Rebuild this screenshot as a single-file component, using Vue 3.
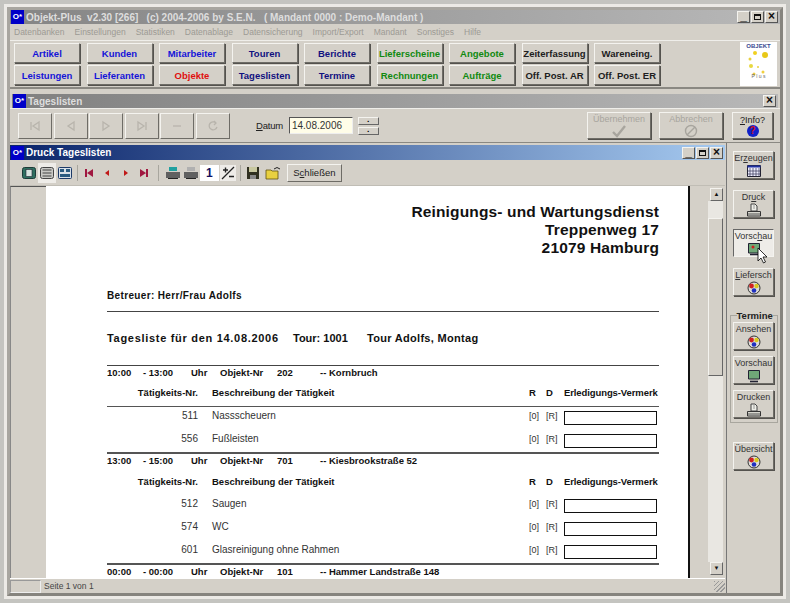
<template>
  <div class="screen">
    <svg class="defs" width="0" height="0">
      <symbol id="ico-print" viewBox="0 0 16 14">
        <path d="M5 1 H9 L11 3 V8 H5 Z" fill="#eeeee8" stroke="#444" />
        <path d="M7 3 H9 M7 5 H9" stroke="#777" stroke-width="0.7" />
        <path d="M1.5 8.5 H14.5 V13 H1.5 Z" fill="#d8d8d0" stroke="#333" />
        <path d="M2 11 H14" stroke="#333" stroke-width="0.8" />
      </symbol>
      <symbol id="ico-colors" viewBox="0 0 16 14">
        <circle cx="8" cy="7" r="6" fill="#dcdcd8" stroke="#333" />
        <circle cx="5.5" cy="5" r="2.4" fill="#d02020" />
        <circle cx="10.5" cy="5" r="2.2" fill="#d8c820" />
        <circle cx="8" cy="9.5" r="2.3" fill="#2030c0" />
      </symbol>
      <symbol id="ico-screen" viewBox="0 0 16 14">
        <path d="M2.5 1.5 H13.5 V10 H2.5 Z" fill="#70a878" stroke="#223" />
        <path d="M4 12.5 H12" stroke="#223" stroke-width="1.6" />
      </symbol>
    </svg>
    <div class="outer">
      <div class="frame">
        <div class="title main-title">
          <span class="app-ico">O*</span>
          <span class="title-text">Objekt-Plus&nbsp; v2.30 [266] &nbsp;&nbsp;(c) 2004-2006 by S.E.N. &nbsp;&nbsp;( Mandant 0000 : Demo-Mandant )</span>
          <div class="win-btns">
            <span class="wb">_</span><span class="wb box-glyph"><i></i></span><span class="wb">×</span>
          </div>
        </div>
        <div class="menu">
          <span v-for="m in menu" :key="m">{{ m }}</span>
        </div>
        <div class="nav">
          <div class="nav-grid">
            <button v-for="b in navButtons" :key="b.t" class="nav-btn" :class="b.c">{{ b.t }}</button>
          </div>
          <div class="logo">
            <div class="logo-top">OBJEKT</div>
            <svg viewBox="0 0 36 26" width="36" height="26">
              <circle cx="14" cy="3" r="2" fill="#f0d020" />
              <circle cx="24" cy="5" r="3" fill="#e8c818" />
              <circle cx="9" cy="9" r="1.5" fill="#e8d040" />
              <circle cx="10" cy="16" r="2" fill="#e8d840" />
              <circle cx="17" cy="17" r="1" fill="#e8d040" />
              <circle cx="22" cy="22" r="1.5" fill="#f0d040" />
              <circle cx="13" cy="24" r="1.5" fill="#f0c840" />
            </svg>
            <div class="logo-bot">P l u s</div>
          </div>
        </div>

        <div class="title sub-title">
          <span class="app-ico">O*</span>
          <span class="title-text">Tageslisten</span>
          <div class="win-btns"><span class="wb">×</span></div>
        </div>
        <div class="tools">
          <div class="nav-icons">
            <button v-for="(d, i) in toolPaths" :key="i" class="tool-btn">
              <svg viewBox="0 0 14 14" width="14" height="14"><path :d="d" fill="none" stroke="#b8b4ac" stroke-width="1.3" /></svg>
            </button>
          </div>
          <label class="datum"><u>D</u>atum</label>
          <div class="date-input">14.08.2006</div>
          <div class="spin"><span>▪</span><span>▪</span></div>
          <div class="spacer"></div>
          <button class="big-btn disabled">
            <span>Übernehmen</span>
            <svg viewBox="0 0 16 14" width="16" height="14"><path d="M2 8 L6 12 L14 2" fill="none" stroke="#a8a59e" stroke-width="2.4" /></svg>
          </button>
          <button class="big-btn disabled">
            <span>Abbrechen</span>
            <svg viewBox="0 0 14 14" width="14" height="14"><circle cx="7" cy="7" r="5.5" fill="none" stroke="#a8a59e" stroke-width="1.4" /><path d="M3 11 L11 3" stroke="#a8a59e" stroke-width="1.4" /></svg>
          </button>
          <button class="big-btn info">
            <span><u>?</u>Info?</span>
            <span class="info-dot">?</span>
          </button>
        </div>

        <div class="body">
          <div class="print-win">
            <div class="title print-title">
              <span class="app-ico">O*</span>
              <span class="title-text">Druck Tageslisten</span>
              <div class="win-btns"><span class="wb">_</span><span class="wb box-glyph"><i></i></span><span class="wb">×</span></div>
            </div>
            <div class="print-tools">
              <svg class="t1" viewBox="0 0 14 12" width="14" height="12"><rect x="0.5" y="0.5" width="13" height="11" rx="2" fill="#2f6f60" stroke="#1c3a38" /><rect x="4" y="2.5" width="6" height="7" fill="#d8e4e0" stroke="#223" stroke-width="0.6" /></svg>
              <span class="t2">
                <svg viewBox="0 0 14 12" width="14" height="12"><rect x="0.5" y="0.5" width="13" height="11" rx="2" fill="#c8c8c4" stroke="#444" /><path d="M2.5 3 H11.5 M2.5 6 H11.5 M2.5 9 H11.5" stroke="#444" /></svg>
              </span>
              <svg class="t3" viewBox="0 0 14 12" width="14" height="12"><rect x="0.5" y="0.5" width="13" height="11" rx="1" fill="#d8e0e8" stroke="#1c3a68" /><rect x="2" y="2" width="4" height="3" fill="#2a5a80" /><rect x="8" y="2" width="4" height="3" fill="#2a5a80" /><rect x="2" y="7" width="10" height="3" fill="#2a5a80" /></svg>
              <span class="sep s1"></span>
              <span class="nav-arrows">
                <svg v-for="(a, i) in arrowPaths" :key="i" viewBox="0 0 10 10" width="10" height="10"><path :d="a.d" :fill="a.c" /></svg>
              </span>
              <span class="sep s2"></span>
              <svg class="pr1" viewBox="0 0 16 14" width="16" height="14"><path d="M4 1 H12 V5 H4 Z" fill="#20a0a0" /><path d="M1 6 H15 V12 H1 Z" fill="#606060" /><path d="M3 12 H13 V13 H3 Z" fill="#222" /></svg>
              <svg class="pr2" viewBox="0 0 16 14" width="16" height="14"><path d="M4 1 H12 V5 H4 Z" fill="#b0b0b0" /><path d="M1 6 H15 V12 H1 Z" fill="#606060" /><path d="M3 12 H13 V13 H3 Z" fill="#222" /></svg>
              <span class="page-one">1</span>
              <span class="page-more">
                <svg viewBox="0 0 14 14" width="14" height="14"><path d="M1 13 L13 1" stroke="#222" stroke-width="1.2" /><path d="M2 4 H7 M4.5 1.5 V6.5 M8 10.5 H13" stroke="#222" stroke-width="1.4" /></svg>
              </span>
              <span class="sep s3"></span>
              <svg class="save" viewBox="0 0 14 14" width="14" height="14"><path d="M1 1 H13 V13 H1 Z" fill="#303020" /><path d="M3 1 H11 V6 H3 Z" fill="#c8c8a0" /><path d="M4 9 H10 V13 H4 Z" fill="#888" /></svg>
              <svg class="open" viewBox="0 0 16 14" width="16" height="14"><path d="M1 4 H6 L7 5 H13 V13 H1 Z" fill="#e8d040" stroke="#605010" stroke-width="0.8" /><path d="M9 3 Q12 0 15 3" fill="none" stroke="#222" stroke-width="1" /></svg>
              <button class="close-btn">S<u>c</u>hließen</button>
            </div>
            <div class="preview">
              <div class="gutter"></div>
              <div class="paper">
                <div class="company">
                  <div>Reinigungs- und Wartungsdienst</div>
                  <div>Treppenweg 17</div>
                  <div>21079 Hamburg</div>
                </div>
                <div class="betreuer">Betreuer: Herr/Frau Adolfs</div>
                <div class="summary">
                  <span class="sum-date">Tagesliste für den 14.08.2006</span>
                  <span class="sum-tour">Tour: 1001</span>
                  <span class="sum-name">Tour Adolfs, Montag</span>
                </div>
                <div v-for="(g, gi) in groups" :key="g.obj" class="group">
                  <div class="g-head">
                    <span class="g-time">{{ g.from }}</span>
                    <span class="g-to">- {{ g.to }}</span>
                    <span class="g-uhr">Uhr</span>
                    <span class="g-label">Objekt-Nr</span>
                    <span class="g-nr">{{ g.obj }}</span>
                    <span class="g-name">-- {{ g.name }}</span>
                  </div>
                  <template v-if="g.rows.length">
                    <div class="col-head" :class="{ lined: gi === 0 }">
                      <span class="c-nr">Tätigkeits-Nr.</span>
                      <span class="c-desc">Beschreibung der Tätigkeit</span>
                      <span class="c-r">R</span>
                      <span class="c-d">D</span>
                      <span class="c-v">Erledigungs-Vermerk</span>
                    </div>
                    <div v-for="r in g.rows" :key="r.nr" class="row">
                      <span class="c-nr">{{ r.nr }}</span>
                      <span class="c-desc">{{ r.text }}</span>
                      <span class="c-r flag">[0]</span>
                      <span class="c-d flag">[R]</span>
                      <span class="c-v"><i class="box"></i></span>
                    </div>
                  </template>
                </div>
              </div>
              <div class="after-paper"></div>
              <div class="scroll">
                <span class="arrow">▲</span>
                <span class="track-top"></span>
                <span class="thumb"></span>
                <span class="track"></span>
                <span class="arrow">▼</span>
              </div>
            </div>
            <div class="status">
              <span class="st-a"></span>
              <span class="st-b">Seite 1 von 1</span>
              <span class="grip"></span>
            </div>
          </div>
          <div class="side">
            <button class="side-btn">
              <span>Er<u>z</u>eugen</span>
              <svg viewBox="0 0 16 14" width="16" height="14"><path d="M1.5 1.5 H14.5 V12.5 H1.5 Z" fill="#eef" stroke="#223" /><path d="M1.5 2.5 H14.5" stroke="#2030a0" stroke-width="2" /><path d="M4 4 V12 M7 4 V12 M10 4 V12 M13 4 V12 M2 7 H14 M2 10 H14" stroke="#335" stroke-width="0.7" /></svg>
            </button>
            <button class="side-btn">
              <span>Dr<u>u</u>ck</span>
              <svg width="16" height="14"><use href="#ico-print" /></svg>
            </button>
            <button class="side-btn pressed">
              <span>Vorsc<u>h</u>au</span>
              <svg viewBox="0 0 16 14" width="16" height="14"><path d="M2.5 1.5 H13.5 V11 H2.5 Z" fill="#70a878" stroke="#223" /><circle cx="7" cy="5" r="1.5" fill="#d02020" /><path d="M4 12.5 H12" stroke="#223" stroke-width="1.5" /></svg>
              <svg class="cursor" viewBox="0 0 12 18" width="12" height="18"><path d="M1 1 V14 L4 11 L6.5 16 L8.5 15 L6 10 H10 Z" fill="#fff" stroke="#000" stroke-width="0.8" /></svg>
            </button>
            <button class="side-btn">
              <span><u>L</u>iefersch</span>
              <svg width="16" height="14"><use href="#ico-colors" /></svg>
            </button>
            <fieldset class="termine">
              <legend>Termine</legend>
              <button class="side-btn">
                <span>Ansehen</span>
                <svg width="16" height="14"><use href="#ico-colors" /></svg>
              </button>
              <button class="side-btn">
                <span>Vorschau</span>
                <svg width="16" height="14"><use href="#ico-screen" /></svg>
              </button>
              <button class="side-btn">
                <span>Drucken</span>
                <svg width="16" height="14"><use href="#ico-print" /></svg>
              </button>
            </fieldset>
            <button class="side-btn last">
              <span>Übersicht</span>
              <svg width="16" height="14"><use href="#ico-colors" /></svg>
            </button>
          </div>
        </div>
      </div>
    </div>
  </div>
</template>

<script setup>
const menu = ['Datenbanken', 'Einstellungen', 'Statistiken', 'Datenablage', 'Datensicherung', 'Import/Export', 'Mandant', 'Sonstiges', 'Hilfe'];

const navButtons = [
  { t: 'Artikel', c: 'blue' },
  { t: 'Kunden', c: 'blue' },
  { t: 'Mitarbeiter', c: 'blue' },
  { t: 'Touren', c: 'navy' },
  { t: 'Berichte', c: 'navy' },
  { t: 'Lieferscheine', c: 'green' },
  { t: 'Angebote', c: 'green' },
  { t: 'Zeiterfassung', c: 'black' },
  { t: 'Wareneing.', c: 'black' },
  { t: 'Leistungen', c: 'blue' },
  { t: 'Lieferanten', c: 'blue' },
  { t: 'Objekte', c: 'red' },
  { t: 'Tageslisten', c: 'navy' },
  { t: 'Termine', c: 'navy' },
  { t: 'Rechnungen', c: 'green' },
  { t: 'Aufträge', c: 'green' },
  { t: 'Off. Post. AR', c: 'black' },
  { t: 'Off. Post. ER', c: 'black' },
];

const toolPaths = [
  'M3 3 V11 M11 3 L5 7 L11 11 Z',
  'M10 3 L4 7 L10 11 Z',
  'M4 3 L10 7 L4 11 Z',
  'M3 3 L9 7 L3 11 Z M11 3 V11',
  'M3 7 H11',
  'M10 4 A4 4 0 1 0 11 8 M8 2 L10 4 L8 6',
];

const arrowPaths = [
  { d: 'M1 1 H3 V9 H1 Z M9 1 V9 L3 5 Z', c: '#a01840' },
  { d: 'M7 2 V8 L3 5 Z', c: '#c01818' },
  { d: 'M3 2 V8 L7 5 Z', c: '#c01818' },
  { d: 'M1 1 V9 L7 5 Z M7 1 H9 V9 H7 Z', c: '#a01840' },
];

const groups = [
  {
    from: '10:00', to: '13:00', obj: '202', name: 'Kornbruch',
    rows: [
      { nr: '511', text: 'Nassscheuern' },
      { nr: '556', text: 'Fußleisten' },
    ],
  },
  {
    from: '13:00', to: '15:00', obj: '701', name: 'Kiesbrookstraße 52',
    rows: [
      { nr: '512', text: 'Saugen' },
      { nr: '574', text: 'WC' },
      { nr: '601', text: 'Glasreinigung ohne Rahmen' },
    ],
  },
  { from: '00:00', to: '00:00', obj: '101', name: 'Hammer Landstraße 148', rows: [] },
];
</script>

<style>
html, body { margin: 0; background: #d4d0c8; }
</style>

<style scoped>
.screen {
  width: 790px;
  height: 603px;
  box-sizing: border-box;
  padding: 4px;
  background: #c4c4c0;
  font-family: "Liberation Sans", Arial, sans-serif;
  font-size: 10px;
  overflow: hidden;
}
.defs { position: absolute; }
.outer {
  height: 595px;
  box-sizing: border-box;
  border: 3px solid #eceae6;
}
.frame {
  height: 589px;
  box-sizing: border-box;
  border: 3px solid;
  border-color: #a8a6a0 #86847e #86847e #a8a6a0;
  background: #d4d0c8;
  display: flex;
  flex-direction: column;
}
button {
  font-family: inherit;
  padding: 0;
  background: #d4d0c8;
  border: 1px solid;
  border-color: #f4f3ef #6e6c66 #6e6c66 #f4f3ef;
  box-shadow: 1px 1px 0 #54524e;
  color: #222;
}
.title {
  display: flex;
  align-items: center;
  color: #dedede;
  font-weight: bold;
  flex: none;
}
.main-title {
  height: 14px;
  background: linear-gradient(90deg, #858585, #b8b8b8);
}
.sub-title {
  height: 14px;
  margin: 5px 2px 0;
  background: linear-gradient(90deg, #808080, #b8b8b8);
}
.print-title {
  height: 15px;
  background: linear-gradient(90deg, #0a246a, #a6caf0);
  color: #fff;
}
.app-ico {
  width: 13px;
  height: 14px;
  margin: 0 2px 0 1px;
  background: #0000c8;
  color: #fff;
  font-size: 8px;
  line-height: 14px;
  text-align: center;
  flex: none;
}
.title-text { flex: 1; white-space: nowrap; }
.win-btns { display: flex; gap: 1px; margin-right: 2px; }
.wb {
  width: 13px;
  height: 12px;
  box-sizing: border-box;
  background: #d4d0c8;
  border: 1px solid;
  border-color: #f4f3ef #555 #555 #f4f3ef;
  color: #111;
  font-size: 12px;
  line-height: 9px;
  text-align: center;
}
.box-glyph { display: flex; align-items: center; justify-content: center; }
.box-glyph i {
  width: 7px;
  height: 6px;
  box-sizing: border-box;
  border: 1px solid #111;
  border-top-width: 2px;
}
.menu {
  display: flex;
  gap: 10px;
  height: 16px;
  align-items: center;
  padding-left: 4px;
  color: #9c9a94;
  font-size: 8.5px;
  flex: none;
}
.nav {
  height: 46px;
  display: flex;
  align-items: center;
  justify-content: space-between;
  border-top: 1px solid #efeeea;
  border-bottom: 2px solid #8a8882;
  flex: none;
}
.nav-grid {
  display: grid;
  grid-template-columns: repeat(9, 66px);
  grid-auto-rows: 20px;
  column-gap: 6.5px;
  row-gap: 2px;
  padding-left: 4px;
}
.nav-btn {
  font-size: 9.5px;
  font-weight: bold;
  white-space: nowrap;
}
.blue { color: #1414d8; }
.navy { color: #101080; }
.green { color: #108a10; }
.black { color: #202020; }
.red { color: #e01010; }
.logo {
  width: 37px;
  height: 44px;
  margin-right: 3px;
  background: #fff;
  text-align: center;
  overflow: hidden;
}
.logo svg { display: block; margin: -1px auto -4px; }
.logo-top { font-size: 6px; font-weight: bold; color: #3a4a90; line-height: 9px; }
.logo-bot { font-size: 5px; color: #666; line-height: 8px; }
.tools {
  height: 33px;
  display: flex;
  align-items: center;
  padding: 0 7px 0 8px;
  border-top: 1px solid #efeeea;
  flex: none;
}
.nav-icons { display: flex; gap: 1.6px; }
.tool-btn {
  width: 34px;
  height: 26px;
  box-shadow: none;
  display: flex;
  align-items: center;
  justify-content: center;
}
.datum { margin-left: 26px; font-size: 9.5px; color: #222; letter-spacing: -0.2px; }
.date-input {
  margin-left: 6px;
  width: 64px;
  height: 17px;
  box-sizing: border-box;
  padding-left: 2px;
  background: #fffde8;
  border: 1px solid;
  border-color: #555 #eee #eee #555;
  font-size: 10px;
  line-height: 15px;
  color: #333;
}
.spin { display: flex; flex-direction: column; gap: 2px; margin-left: 5px; }
.spin span {
  width: 21px;
  height: 8px;
  box-sizing: border-box;
  border: 1px solid;
  border-color: #f4f3ef #666 #666 #f4f3ef;
  font-size: 5px;
  line-height: 6px;
  text-align: center;
}
.spacer { flex: 1; }
.big-btn {
  width: 64px;
  height: 27px;
  margin-left: 8px;
  font-size: 9px;
  display: flex;
  flex-direction: column;
  align-items: center;
  justify-content: center;
}
.disabled { color: #a8a59e; }
.info { width: 41px; margin-left: 9px; color: #222; }
.info-dot {
  width: 12px;
  height: 12px;
  border-radius: 50%;
  background: #1020c8;
  color: #d01020;
  font-weight: bold;
  font-size: 10px;
  line-height: 12px;
}
.body {
  flex: 1;
  display: flex;
  min-height: 0;
  border-top: 1px solid #8a8882;
}
.print-win {
  flex: 1;
  min-width: 0;
  display: flex;
  flex-direction: column;
  padding-top: 2px;
}
.print-tools {
  height: 25px;
  display: flex;
  align-items: center;
  padding-left: 12px;
  border-bottom: 1px solid #c0bdb5;
  flex: none;
}
.t2 {
  width: 18px;
  height: 20px;
  margin: 0 2px;
  background: #eeece8;
  display: flex;
  align-items: center;
  justify-content: center;
}
.sep { width: 1px; height: 16px; background: #a8a69e; }
.s1 { margin-left: 5px; }
.s2 { margin-left: 9px; }
.s3 { margin-left: 4px; }
.nav-arrows { display: flex; gap: 8.3px; margin-left: 6px; }
.pr1 { margin-left: 6px; }
.pr2 { margin-left: 2px; }
.page-one {
  width: 19px;
  height: 16px;
  margin-left: 1px;
  background: #fff;
  color: #101060;
  font-size: 12px;
  font-weight: bold;
  line-height: 16px;
  text-align: center;
}
.page-more {
  width: 16px;
  height: 16px;
  margin-left: 1px;
  background: #eeece8;
  display: flex;
  align-items: center;
  justify-content: center;
}
.save { margin-left: 5px; }
.open { margin-left: 5px; }
.close-btn {
  width: 55px;
  height: 18px;
  margin-left: 6px;
  font-size: 9.5px;
  box-shadow: none;
}
.preview {
  flex: 1;
  min-height: 0;
  display: flex;
  overflow: hidden;
}
.gutter {
  width: 36px;
  box-sizing: border-box;
  background: #d4d0c8;
  border-top: 1px solid #555;
  border-left: 1px solid #888;
  flex: none;
}
.paper {
  width: 644px;
  flex: none;
  box-sizing: border-box;
  padding: 17px 29px 0 61px;
  background: #fff;
  border-right: 2px solid #111;
  overflow: hidden;
  color: #111;
}
.company {
  font-size: 15.5px;
  font-weight: bold;
  letter-spacing: 0.15px;
  text-align: right;
  line-height: 18px;
}
.betreuer {
  margin-top: 32px;
  padding-bottom: 8px;
  border-bottom: 1px solid #444;
  font-size: 10px;
  font-weight: bold;
  letter-spacing: 0.35px;
  line-height: 14px;
}
.summary {
  display: flex;
  margin-top: 19px;
  padding-bottom: 20px;
  border-bottom: 1px solid #444;
  font-size: 11px;
  font-weight: bold;
  line-height: 14px;
}
.sum-date { width: 186px; letter-spacing: 0.7px; }
.sum-tour { width: 74px; }
.sum-name { letter-spacing: 0.3px; }
.group { font-size: 9.5px; }
.group + .group { margin-top: -1px; border-top: 2px solid #555; }
.g-head {
  display: flex;
  height: 13px;
  align-items: center;
  font-weight: bold;
  white-space: nowrap;
}
.g-time { width: 36px; }
.g-to { width: 48px; }
.g-uhr { width: 29px; }
.g-label { width: 57px; }
.g-nr { width: 43px; }
.col-head {
  display: flex;
  height: 28px;
  box-sizing: border-box;
  align-items: center;
  font-weight: bold;
}
.lined { border-bottom: 1px solid #555; }
.row {
  display: flex;
  height: 23px;
  line-height: 18px;
  font-size: 10px;
  color: #333;
}
.c-nr { width: 91px; text-align: right; flex: none; }
.c-desc { width: 317px; margin-left: 14px; flex: none; }
.c-r { width: 17px; flex: none; }
.c-d { width: 18px; flex: none; }
.flag { font-size: 9px; }
.c-v { width: 94px; flex: none; white-space: nowrap; }
.col-head .c-v { letter-spacing: -0.1px; }
.box {
  display: block;
  width: 93px;
  height: 14px;
  margin-top: 4px;
  box-sizing: border-box;
  border: 1px solid #111;
}
.after-paper {
  width: 18px;
  background: #d4d0c8;
  flex: none;
}
.scroll {
  width: 15px;
  box-sizing: border-box;
  padding: 2px 0 3px;
  display: flex;
  flex-direction: column;
  flex: none;
}
.arrow {
  height: 13px;
  box-sizing: border-box;
  margin-left: 2px;
  background: #d4d0c8;
  border: 1px solid;
  border-color: #f4f3ef #666 #666 #f4f3ef;
  font-size: 6px;
  line-height: 11px;
  text-align: center;
  color: #111;
  flex: none;
}
.track-top { height: 17px; background: #e9e7e2; flex: none; }
.thumb {
  height: 158px;
  box-sizing: border-box;
  background: #d4d0c8;
  border: 1px solid;
  border-color: #f4f3ef #666 #666 #f4f3ef;
  flex: none;
}
.track { flex: 1; background: #e9e7e2; }
.status {
  height: 15px;
  display: flex;
  align-items: center;
  box-sizing: border-box;
  border-top: 1px solid #fff;
  flex: none;
  font-size: 8.5px;
  color: #444;
}
.st-a {
  width: 31px;
  height: 13px;
  box-sizing: border-box;
  border: 1px solid;
  border-color: #999 #eee #eee #999;
}
.st-b { flex: 1; padding-left: 3px; }
.grip {
  width: 11px;
  height: 11px;
  background: repeating-linear-gradient(135deg, #999 0 1px, #d4d0c8 1px 3px);
}
.side {
  width: 54px;
  flex: none;
  margin-left: 1px;
  padding-top: 8px;
  box-sizing: border-box;
  display: flex;
  flex-direction: column;
  align-items: center;
  gap: 11px;
  border-left: 1px solid #777;
}
.side-btn {
  position: relative;
  width: 41px;
  height: 28px;
  flex: none;
  font-size: 9px;
  line-height: 11px;
  display: flex;
  flex-direction: column;
  align-items: center;
  justify-content: center;
  white-space: nowrap;
  color: #333;
}
.pressed {
  background: #eeece8;
  border-color: #666 #f4f3ef #f4f3ef #666;
  box-shadow: none;
}
.cursor { position: absolute; left: 23px; top: 17px; }
.termine {
  width: 48px;
  margin: 3px 0 0;
  padding: 1px 0 4px;
  box-sizing: border-box;
  border: 1px solid #a8a69e;
  display: flex;
  flex-direction: column;
  align-items: center;
  gap: 6px;
}
.termine legend {
  margin-left: 6px;
  padding: 0;
  font-size: 9.5px;
  line-height: 11px;
  font-weight: bold;
  color: #222;
}
.last { margin-top: 8px; }
</style>
